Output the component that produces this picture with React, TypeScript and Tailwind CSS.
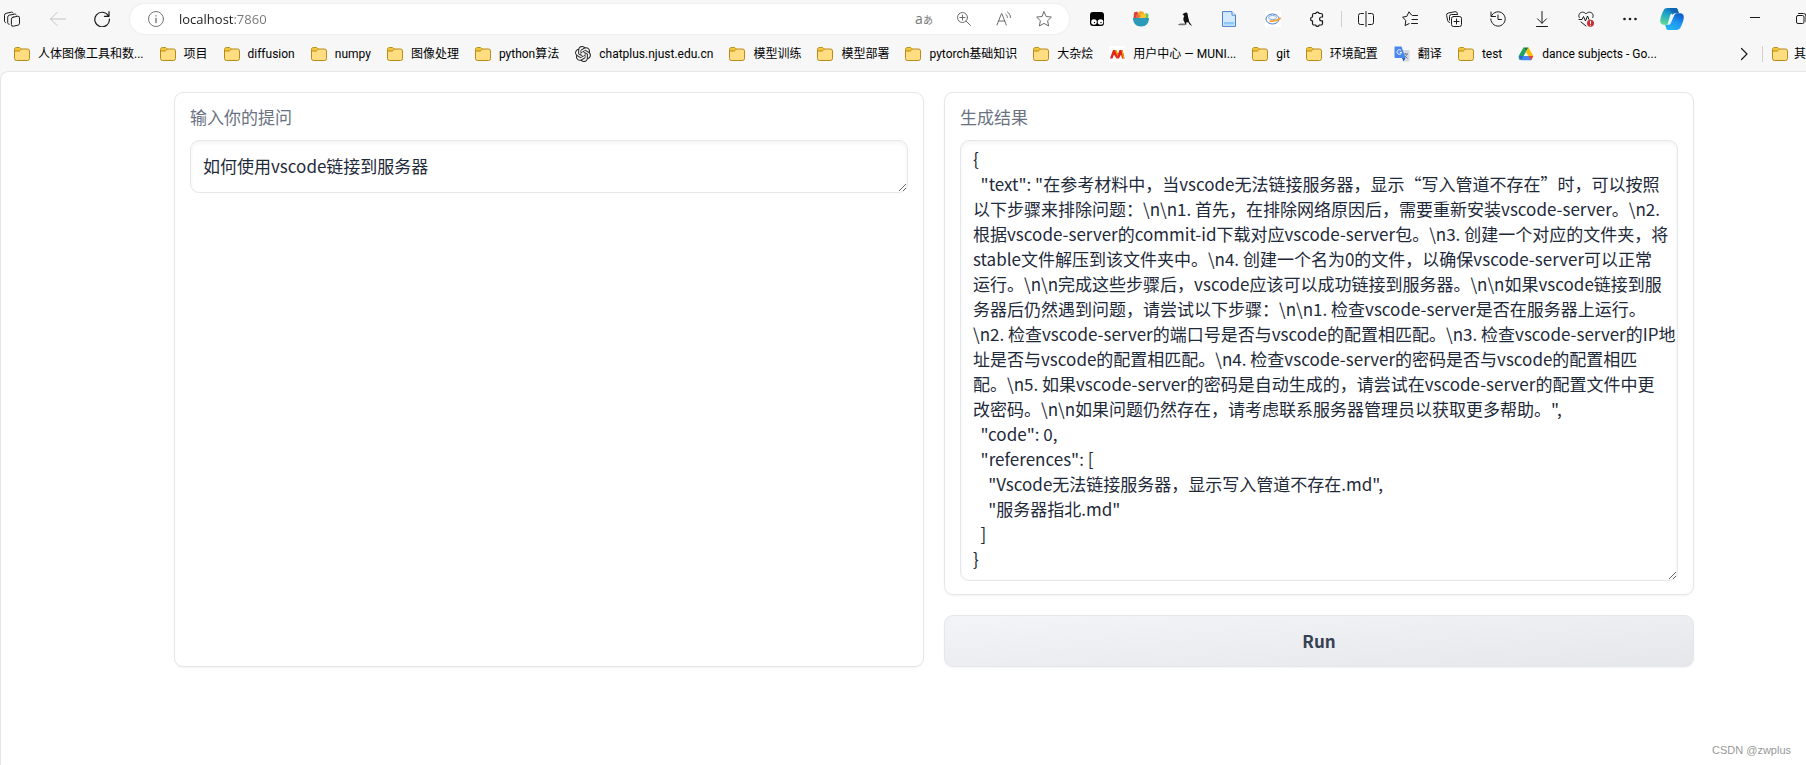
import type { ReactNode } from "react"
import { SiOpenai } from "react-icons/si"

interface IconProps {
  size?: string
  color?: string
  children: ReactNode
}

// 16x16 outline icon, drawn on the pixel grid
function Icon({ size = "size-4", color = "text-[#1b1b1b]", children }: IconProps) {
  return (
    <svg
      viewBox="0 0 16 16"
      className={`${size} ${color} shrink-0`}
      fill="none"
      stroke="currentColor"
      strokeLinecap="round"
      strokeLinejoin="round"
      aria-hidden="true"
    >
      {children}
    </svg>
  )
}

function ToolButton({ label, width = "w-11", children }: { label: string; width?: string; children: ReactNode }) {
  return (
    <button type="button" aria-label={label} className={`flex h-8 shrink-0 items-center justify-center ${width}`}>
      {children}
    </button>
  )
}

function Folder() {
  return (
    <svg viewBox="0 0 16 16" className="size-4 shrink-0" aria-hidden="true">
      <path
        d="M0.5 3.500a2 2 0 0 1 2-2h2.700a1.500 1.500 0 0 1 1.100.5l1 1h6.200a2 2 0 0 1 2 2v7.500a2 2 0 0 1-2 2h-11a2 2 0 0 1-2-2z"
        fill="#ffdd80"
        stroke="#b58c14"
      />
      <path d="M1 3.600A1.600 1.600 0 0 1 2.600 2h2.500l1.900 1.200-1.600 1.600H1z" fill="#f5c433" />
      <path d="M0.700 5h4.300c.4 0 .7-.2 1-.5L7.500 3" fill="none" stroke="#b58c14" />
    </svg>
  )
}

function Munich() {
  return (
    <svg viewBox="0 0 16 16" className="size-4 shrink-0" aria-hidden="true">
      <rect width="16" height="16" fill="#fff" />
      <path d="M1 12.500 4 4h3l2 4-1.500 4.500L5 8.500l-1.500 4z" fill="#e2231a" />
      <path d="M7.500 12.500 9 8l1.500-4h3l2 8.500H13l-1-4-2 4z" fill="#e2231a" />
      <path d="m6 4 1.500 0 1.500 4-.8 2zM12.500 4h1l2 8.500h-1.500z" fill="#f7a400" />
    </svg>
  )
}

function Translate() {
  return (
    <svg viewBox="0 0 16 16" className="size-4 shrink-0" aria-hidden="true">
      <path d="M6 4h8.500a1 1 0 0 1 1 1v9.500a1 1 0 0 1-1 1H9.500z" fill="#d8dade" />
      <path d="M9 8h5M11.500 7v1M13 8c-.5 2-2 3.500-3.500 4M10.500 9.500l3 3" stroke="#6b7f93" fill="none" />
      <path d="M1 0.500h6.500L11.500 12H1.500a1 1 0 0 1-1-1V1a.5.5 0 0 1 .5-.5z" fill="#4a86f0" />
      <path d="m8 12 3.500 0L9.500 15.500z" fill="#2f5cc0" />
      <path d="M7.200 4.700A2.300 2.300 0 1 0 7.600 6.400H5.600" stroke="#fff" fill="none" />
    </svg>
  )
}

function Drive() {
  return (
    <svg viewBox="0 0 16 16" className="size-4 shrink-0" aria-hidden="true">
      <path d="M5.500 1.500 8 5.800 3.300 14 1 13.500.7 10z" fill="#1da362" />
      <path d="M5.500 1.500h5L8 5.800z" fill="#188038" />
      <path d="M10.500 1.500 15.300 10h-5L8 5.800z" fill="#fbbc04" />
      <path d="M5.700 10h9.600L13 14.200H3.200z" fill="#4285f4" />
      <path d="M10.300 10h5L13.500 14z" fill="#ea4335" />
      <path d="M5.700 10 3.200 14.200.7 10z" fill="#2a66d9" />
    </svg>
  )
}

function Copilot() {
  return (
    <svg viewBox="0 0 24 22" className="h-[22px] w-6 shrink-0" aria-hidden="true">
      <defs>
        <linearGradient id="copilotLeft" x1="0.600" y1="0" x2="0.200" y2="1">
          <stop offset="0" stopColor="#0c6fc4" />
          <stop offset="0.400" stopColor="#1fa6c9" />
          <stop offset="1" stopColor="#5fdc90" />
        </linearGradient>
        <linearGradient id="copilotRight" x1="0.800" y1="0" x2="0.300" y2="1">
          <stop offset="0" stopColor="#0b57c9" />
          <stop offset="0.500" stopColor="#2094f0" />
          <stop offset="1" stopColor="#22b4f5" />
        </linearGradient>
      </defs>
      <path d="M7.500 0h8.200c1 0 1.700.7 2 1.600l1.200 3.700h-3c-1.500 0-2.500.9-3 2.300L10.200 14c-.6 1.700-1.500 2.800-3.200 2.800H4C1.500 16.800 0 15 .2 12.500.5 9 2 5.200 3.500 2.400 4.300.8 5.700 0 7.500 0z" fill="url(#copilotLeft)" />
      <path d="M16.500 22H8.300c-1 0-1.700-.7-2-1.600l-1.200-3.700h3c1.500 0 2.500-.9 3-2.300L13.800 8c.6-1.700 1.500-2.800 3.200-2.800h3c2.500 0 4 1.800 3.800 4.300-.3 3.500-1.800 7.300-3.300 10.100-.8 1.600-2.200 2.400-4 2.400z" fill="url(#copilotRight)" />
      <path d="m13.800 8-3.600 6.500c-.5 1.400-1.400 2.200-2.800 2.200L9.800 8.500c.5-2 1.700-3.200 3.700-3.200h3.300c-1.500.2-2.400 1.100-3 2.700z" fill="#e9f7fb" />
      <path d="M9.500 0h6.200c1 0 1.700.7 2 1.600l1.200 3.700h-3c-1.500 0-2.600.6-3.400 2z" fill="#0f5fae" opacity="0.700" />
    </svg>
  )
}

const bookmarks: { title: string; icon: ReactNode }[] = [
  { title: "人体图像工具和数...", icon: <Folder /> },
  { title: "项目", icon: <Folder /> },
  { title: "diffusion", icon: <Folder /> },
  { title: "numpy", icon: <Folder /> },
  { title: "图像处理", icon: <Folder /> },
  { title: "python算法", icon: <Folder /> },
  { title: "chatplus.njust.edu.cn", icon: <SiOpenai className="size-4 shrink-0 text-[#2a2a2a]" /> },
  { title: "模型训练", icon: <Folder /> },
  { title: "模型部署", icon: <Folder /> },
  { title: "pytorch基础知识", icon: <Folder /> },
  { title: "大杂烩", icon: <Folder /> },
  { title: "用户中心 — MUNI...", icon: <Munich /> },
  { title: "git", icon: <Folder /> },
  { title: "环境配置", icon: <Folder /> },
  { title: "翻译", icon: <Translate /> },
  { title: "test", icon: <Folder /> },
  { title: "dance subjects - Go...", icon: <Drive /> },
]

const question = "如何使用vscode链接到服务器"

const result = String.raw`{
  "text": "在参考材料中，当vscode无法链接服务器，显示“写入管道不存在”时，可以按照
以下步骤来排除问题：\n\n1. 首先，在排除网络原因后，需要重新安装vscode-server。\n2.
根据vscode-server的commit-id下载对应vscode-server包。\n3. 创建一个对应的文件夹，将
stable文件解压到该文件夹中。\n4. 创建一个名为0的文件，以确保vscode-server可以正常
运行。\n\n完成这些步骤后，vscode应该可以成功链接到服务器。\n\n如果vscode链接到服
务器后仍然遇到问题，请尝试以下步骤：\n\n1. 检查vscode-server是否在服务器上运行。
\n2. 检查vscode-server的端口号是否与vscode的配置相匹配。\n3. 检查vscode-server的IP地
址是否与vscode的配置相匹配。\n4. 检查vscode-server的密码是否与vscode的配置相匹
配。\n5. 如果vscode-server的密码是自动生成的，请尝试在vscode-server的配置文件中更
改密码。\n\n如果问题仍然存在，请考虑联系服务器管理员以获取更多帮助。",
  "code": 0,
  "references": [
    "Vscode无法链接服务器，显示写入管道不存在.md",
    "服务器指北.md"
  ]
}`

function AddressBar() {
  return (
    <div className="mx-[6px] flex h-[30px] min-w-0 flex-1 items-center rounded-full bg-white pl-[18px] pr-[5px] shadow-[0_0_3px_rgba(0,0,0,0.08)]">
      <Icon color="text-[#767676]">
        <circle cx="8" cy="8" r="7.500" />
        <path d="M8 7.500v4M8 4.800v.1" strokeWidth="1.400" />
      </Icon>
      <input
        type="text"
        aria-label="地址和搜索栏"
        defaultValue="localhost:7860"
        className="ml-[15px] min-w-0 flex-1 bg-[linear-gradient(90deg,#1b1b1b_55px,#767676_55px)] bg-clip-text font-['Open_Sans',sans-serif] text-[13px] leading-5 text-transparent outline-none"
      />
      <ToolButton label="翻译" width="w-10">
        <span className="font-['Open_Sans','Noto_Sans_CJK_JP',sans-serif] text-sm leading-4 text-[#767676]">
          a<span className="text-[10px]">あ</span>
        </span>
      </ToolButton>
      <ToolButton label="缩放" width="w-10">
        <Icon color="text-[#6b6b6b]">
          <circle cx="6.500" cy="6.500" r="5" />
          <path d="m10.200 10.200 4.300 4.300M4 6.500h5M6.500 4v5" />
        </Icon>
      </ToolButton>
      <ToolButton label="大声朗读" width="w-10">
        <Icon color="text-[#6b6b6b]">
          <path d="M1 14 5.500 2.500h.3L10.300 14M2.700 10h6M9.800 3.200c1 .8 1.500 2 1.500 3.300M11.500 1c1.900 1.300 2.900 3.200 3 5.500" />
        </Icon>
      </ToolButton>
      <ToolButton label="收藏" width="w-10">
        <Icon color="text-[#6b6b6b]">
          <path d="m8 .8 2.200 4.700 5.200.6-3.800 3.600 1 5.300L8 12.400 3.400 15l1-5.300L.6 6.100l5.200-.6z" />
        </Icon>
      </ToolButton>
    </div>
  )
}

function Toolbar() {
  return (
    <div className="flex h-[38px] items-center overflow-hidden">
      <ToolButton label="工作区" width="w-9 pr-3">
        <Icon>
          <path d="M9 6.200l4.500-.9a1.600 1.600 0 0 1 2 1.600v5.300a2 2 0 0 1-1.600 2l-4.500 1a1.600 1.600 0 0 1-2-1.600V8.200a2 2 0 0 1 1.600-2z" />
          <path d="M5.200 13.300c-1-.1-1.500-.7-1.500-1.700V6.200a2 2 0 0 1 1.600-2l5.200-1.100c.8-.2 1.500.1 1.800.9M1.800 11.700C1 11.500.5 10.900.5 10V4.300a2 2 0 0 1 1.600-2L7.300 1.200c.8-.2 1.500.1 1.800.8" />
        </Icon>
      </ToolButton>
      <ToolButton label="后退">
        <Icon color="text-[#c4c4c4]">
          <path d="M15.500 8H.8M7 1.500.5 8 7 14.500" />
        </Icon>
      </ToolButton>
      <ToolButton label="刷新">
        <Icon>
          <path d="M14.500 5A7.300 7.300 0 1 0 15.400 8M15 .7v4.600h-4.600" strokeWidth="1.200" />
        </Icon>
      </ToolButton>

      <AddressBar />

      {/* Extensions */}
      <ToolButton label="Tampermonkey">
        <svg viewBox="0 0 16 16" className="size-4" aria-hidden="true">
          <rect x="1" y="1" width="14" height="14" rx="3" fill="#000" />
          <circle cx="5" cy="11" r="2.800" fill="#fff" />
          <circle cx="11.500" cy="11" r="2.800" fill="#fff" />
          <circle cx="5.500" cy="11.500" r="0.700" fill="#000" />
          <circle cx="12" cy="11.500" r="0.700" fill="#000" />
        </svg>
      </ToolButton>
      <ToolButton label="果盘">
        <svg viewBox="0 0 16 16" className="size-4" aria-hidden="true">
          <path d="M1 1.500 4 .5l2 3-1 4H.5z" fill="#d9433c" />
          <path d="M12.500 2 15.500 3l-.5 5h-4z" fill="#6cc551" />
          <circle cx="8" cy="3.500" r="3.200" fill="#f5a623" />
          <circle cx="10.500" cy="5" r="2.500" fill="#fbc531" />
          <circle cx="5" cy="5.500" r="2" fill="#e8743b" />
          <path d="M0 7h16c0 5-3 8.500-8 8.500S0 12 0 7z" fill="#2a9ab8" />
        </svg>
      </ToolButton>
      <ToolButton label="乌鸦">
        <svg viewBox="0 0 16 16" className="size-4" aria-hidden="true">
          <path d="M5.500 3.200 7.500 2c1-1 2.600-.7 3 .6l.6 3.400c.6 1.500.7 3 1 4.500l3 4.500-2.500-1.500-1.300-2.200L9 11.500l.5 2H8L7.500 11C6 9.500 6 7 7.300 5z" fill="#111" />
          <path d="M1 13.500c2-1.500 3.500-1.200 8-.7l-1 1.500H2z" fill="#777" />
        </svg>
      </ToolButton>
      <ToolButton label="文档">
        <svg viewBox="0 0 16 16" className="size-4" aria-hidden="true">
          <path d="M1.500.6H11l3.500 3.500v11.300h-13z" fill="#d5e9fd" stroke="#4a7fd0" />
          <path d="M11 .6v3.500h3.500" fill="#fff" stroke="#4a7fd0" />
          <path d="M3 11h10v2.500H3z" fill="#8cc8fb" />
        </svg>
      </ToolButton>
      <ToolButton label="IE 标签">
        <svg viewBox="0 0 16 16" className="size-4" aria-hidden="true">
          <rect width="16" height="16" fill="#fff" />
          <ellipse cx="7.500" cy="8" rx="6.500" ry="5" fill="none" stroke="#4f81cc" />
          <ellipse cx="7.500" cy="6.500" rx="4" ry="2" fill="none" stroke="#7ba3dc" />
          <path d="M4.500 9.800c4 1 8 0 11.200-2.800" fill="none" stroke="#f2a33a" strokeWidth="1.800" />
        </svg>
      </ToolButton>
      <ToolButton label="扩展">
        <Icon>
          <path
            d="M5 2.500h1.700a1.800 1.800 0 0 1 3.500 0H12a1.500 1.500 0 0 1 1.500 1.500v2h-1a1.900 1.900 0 0 0 0 3.800h1v2.700a1.500 1.500 0 0 1-1.500 1.500h-1.800a1.800 1.800 0 0 1-3.500 0H5A1.500 1.500 0 0 1 3.500 12.500V9.800a1.900 1.900 0 0 1 0-3.800V4A1.500 1.500 0 0 1 5 2.500z"
            strokeWidth="1.200"
          />
        </Icon>
      </ToolButton>

      <div className="flex w-[5px] shrink-0 justify-center">
        <div className="h-4 w-px bg-[#cfcfcf]" />
      </div>

      <ToolButton label="分屏">
        <Icon>
          <path d="M8 .5v15M5.500 2.500h-3a2 2 0 0 0-2 2v7a2 2 0 0 0 2 2h3M10.500 2.500h3a2 2 0 0 1 2 2v7a2 2 0 0 1-2 2h-3" />
        </Icon>
      </ToolButton>
      <ToolButton label="收藏夹">
        <Icon>
          <path d="M15.500 4.500h-5L9.500 4 7 .8 4.800 5.400.6 6.100l3.200 3.500-.7 5 4-2M10 8.500h5.500M9.500 12.500h6" />
        </Icon>
      </ToolButton>
      <ToolButton label="集锦">
        <Icon>
          <rect x="5.500" y="5.500" width="10" height="10" rx="2" />
          <path d="M10.500 8v5M8 10.500h5M3.500 11.500a2.500 2.500 0 0 1-1.800-1.800L.6 4.400a2 2 0 0 1 1.500-2.300L9 .7a2 2 0 0 1 2.300 1.500l.2 1M3.500 9V5.500a2 2 0 0 1 2-2h6" />
        </Icon>
      </ToolButton>
      <ToolButton label="历史记录">
        <Icon>
          <path d="M1 1v4.500h4.500M1.300 5.300A7.200 7.200 0 1 1 .8 8M8 4v4.500h3.500" />
        </Icon>
      </ToolButton>
      <ToolButton label="下载">
        <Icon>
          <path d="M8 .5v11.500M3.500 7.800 8 12.300l4.500-4.500M2.500 15.500h11" />
        </Icon>
      </ToolButton>
      <ToolButton label="浏览器概要">
        <Icon>
          <path d="M1.200 6.500C0 3.500 2 1.200 4.500 1.200 6.200 1.200 7.300 2 8 3c.7-1 1.800-1.800 3.500-1.800 2.500 0 4.500 2.300 3.300 5.300M1 8.500h3l1.500-3 2 4.500L9.500 5l1.500 3.500M3 11l5 4" />
          <circle cx="12.500" cy="12.300" r="3.200" fill="#c62f36" stroke="#c62f36" strokeWidth="0.800" />
          <path d="M12.500 10.300v2.200M12.500 14.200v.1" stroke="#fff" />
        </Icon>
      </ToolButton>
      <ToolButton label="设置及其他">
        <Icon>
          <g fill="currentColor" stroke="none">
            <circle cx="2.500" cy="8" r="1.300" />
            <circle cx="8" cy="8" r="1.300" />
            <circle cx="13.500" cy="8" r="1.300" />
          </g>
        </Icon>
      </ToolButton>
      <ToolButton label="Copilot" width="w-10">
        <Copilot />
      </ToolButton>

      {/* Window controls */}
      <ToolButton label="最小化" width="ml-10 w-[46px]">
        <Icon>
          <path d="M3.500 6.500h9" strokeLinecap="square" />
        </Icon>
      </ToolButton>
      <div className="flex w-7 shrink-0 overflow-hidden">
        <ToolButton label="还原" width="w-[46px]">
          <Icon>
            <rect x="3.500" y="4.500" width="7.500" height="8" rx="1.500" />
            <path d="M5.500 2.500h5a2.500 2.500 0 0 1 2.500 2.500v5.500" />
          </Icon>
        </ToolButton>
      </div>
    </div>
  )
}

function BookmarksBar() {
  return (
    <nav
      aria-label="收藏夹栏"
      className="flex h-[33px] items-center overflow-hidden pb-0.5 pl-[14px] font-['Roboto','Noto_Sans_CJK_SC',sans-serif] text-xs text-black"
    >
      <div className="flex min-w-0 flex-1 items-center gap-4 overflow-hidden">
        {bookmarks.map((bookmark) => (
          <a key={bookmark.title} href="#" className="flex shrink-0 items-center gap-2 whitespace-nowrap">
            {bookmark.icon}
            {bookmark.title}
          </a>
        ))}
      </div>
      <button type="button" aria-label="更多收藏" className="mr-[6px] flex size-6 items-center justify-center">
        <Icon>
          <path d="m5.500 2.500 5.500 5.500-5.500 5.500" strokeWidth="1.200" />
        </Icon>
      </button>
      <div className="h-4 w-px shrink-0 bg-[#cfcfcf]" />
      <a href="#" aria-label="其他收藏夹" className="ml-[9px] flex shrink-0 items-center gap-[6px]">
        <Folder />
        其
      </a>
    </nav>
  )
}

interface TextFieldProps {
  id: string
  label: string
  value: string
  rows: number
  padding: string
}

function TextField({ id, label, value, rows, padding }: TextFieldProps) {
  return (
    <div className="rounded-[9px] border border-gray-200 bg-white px-[15px] pt-[11px] pb-[13px] shadow-[0_1px_2px_rgba(0,0,0,0.05)]">
      <label htmlFor={id} className="mb-[11px] block text-gray-500">
        {label}
      </label>
      <textarea
        id={id}
        rows={rows}
        defaultValue={value}
        spellCheck={false}
        className={`block w-full resize overflow-hidden rounded-[9px] border border-gray-200 bg-white pl-3 whitespace-pre text-gray-800 shadow-[inset_0_2px_4px_rgba(0,0,0,0.05)] outline-none ${padding}`}
      />
    </div>
  )
}

export default function App() {
  return (
    <div className="flex min-h-screen flex-col bg-[#f7f7f7] font-['Noto_Sans_CJK_SC',sans-serif]">
      <header>
        <Toolbar />
        <BookmarksBar />
      </header>

      <div className="flex flex-1 flex-col rounded-tl-lg border-t border-l border-[#e6e6e6] bg-white">
        <main className="grid grid-cols-2 gap-5 pt-5 pr-[112px] pl-[173px] text-[17px] leading-[25px]">
          <TextField id="question" label="输入你的提问" value={question} rows={1} padding="pt-3 pb-[14px]" />
          <div className="flex flex-col gap-5">
            <TextField id="result" label="生成结果" value={result} rows={17} padding="pt-[5px] pb-[9px]" />
            <button
              type="button"
              className="h-[52px] rounded-[9px] border border-gray-200 bg-linear-to-br from-gray-100 to-gray-200 pb-0.5 font-bold text-gray-700 shadow-[0_1px_2px_rgba(0,0,0,0.05)]"
            >
              Run
            </button>
          </div>
        </main>
        <footer className="mt-auto pr-[15px] pb-[5px] text-right font-['Liberation_Sans',sans-serif] text-[11px] leading-5 text-[#999]">
          CSDN @zwplus
        </footer>
      </div>
    </div>
  )
}
